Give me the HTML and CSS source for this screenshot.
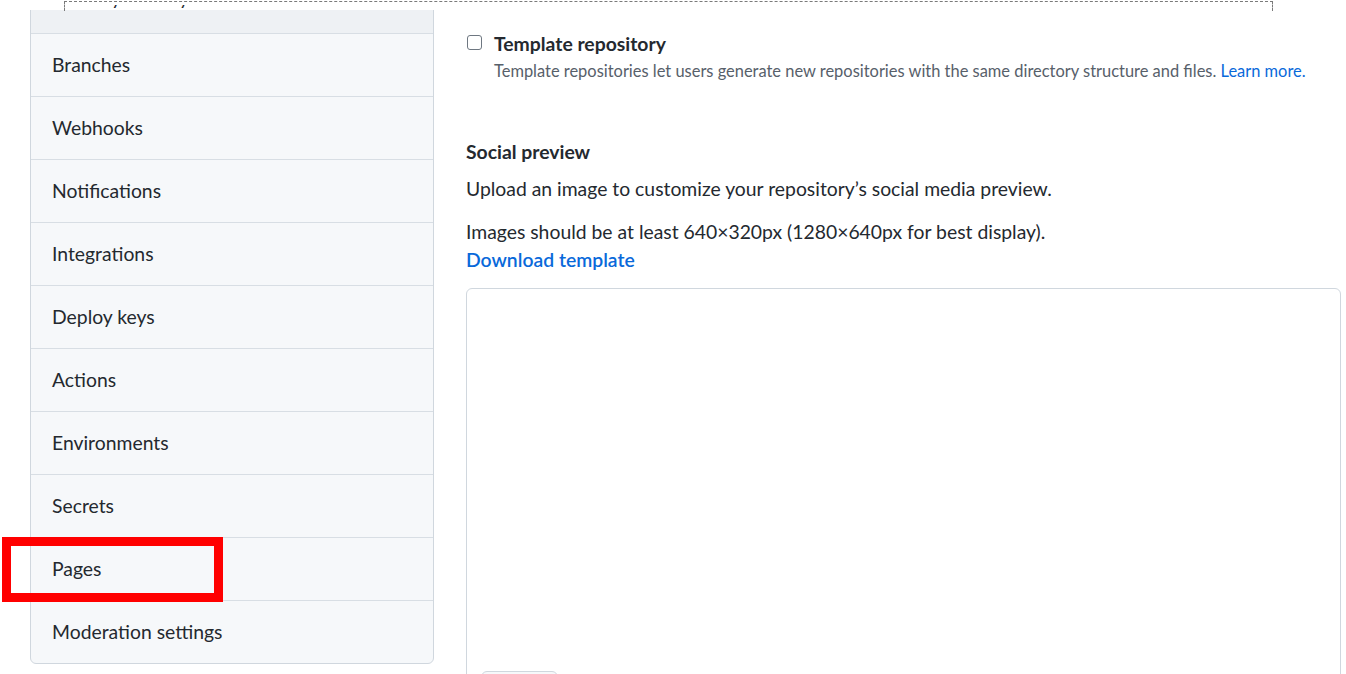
FILE: index.html
```html
<!DOCTYPE html>
<html lang="en">
<head>
<meta charset="utf-8">
<title>Repository settings</title>
<link rel="stylesheet" href="styles.css">
</head>
<body>
<div class="topstrip"></div>
<div class="topmask"><div class="dashbox"></div></div>
<div class="layout">
  <nav class="sidebar">
    <a class="menu-item hover"><span class="lbl">Security &amp; analysis</span></a>
    <a class="menu-item"><span class="lbl">Branches</span></a>
    <a class="menu-item"><span class="lbl">Webhooks</span></a>
    <a class="menu-item"><span class="lbl">Notifications</span></a>
    <a class="menu-item"><span class="lbl">Integrations</span></a>
    <a class="menu-item"><span class="lbl">Deploy keys</span></a>
    <a class="menu-item"><span class="lbl">Actions</span></a>
    <a class="menu-item"><span class="lbl">Environments</span></a>
    <a class="menu-item"><span class="lbl">Secrets</span></a>
    <a class="menu-item"><span class="lbl">Pages</span></a>
    <a class="menu-item"><span class="lbl">Moderation settings</span></a>
  </nav>
  <main class="content">
    <div class="check-row">
      <span class="checkbox"></span>
      <div class="check-text">
        <div class="check-title">Template repository</div>
        <div class="note">Template repositories let users generate new repositories with the same directory structure and files. <a class="link">Learn more.</a></div>
      </div>
    </div>
    <h3 class="section-title">Social preview</h3>
    <p class="para">Upload an image to customize your repository’s social media preview.</p>
    <p class="para tight">Images should be at least 640×320px (1280×640px for best display).<br><a class="link strong">Download template</a></p>
    <div class="preview-box">
      <div class="preview-area"></div>
      <span class="edit-btn"></span>
    </div>
  </main>
</div>
<div class="highlight"></div>
</body>
</html>
```

FILE: styles.css
```css
* { box-sizing: border-box; }
html, body { margin: 0; padding: 0; background: #ffffff; }
body {
  font-family: Lato, "Liberation Sans", sans-serif;
  color: #24292f;
  font-size: 19.35px;
  line-height: 28px;
  width: 1346px;
  height: 674px;
  overflow: hidden;
  position: relative;
}
.topstrip {
  position: absolute;
  left: 0; top: 0;
  width: 1346px;
  height: 10px;
  background: #ffffff;
  z-index: 1;
}
.topmask {
  position: absolute;
  left: 0; top: 0;
  width: 1346px;
  height: 5px;
  background: #ffffff;
  z-index: 3;
}
.dashbox {
  position: absolute;
  left: 64px; top: 1px;
  width: 1209px;
  height: 10px;
  border: 1px dashed #7a7a7a;
  border-bottom: none;
}
.layout {
  display: flex;
  align-items: flex-start;
  padding-left: 30px;
  gap: 32px;
}
.sidebar {
  width: 404px;
  flex: none;
  margin-top: -30px;
  background: #f6f8fa;
  border: 1px solid #d0d7de;
  border-radius: 6px;
  overflow: hidden;
  display: flex;
  flex-direction: column;
}
.menu-item {
  height: 63px;
  display: flex;
  align-items: center;
  padding-left: 21px;
  border-top: 1px solid #d8dee4;
  color: #24292f;
  text-decoration: none;
}
.menu-item:first-child { border-top: none; height: 62px; }
.menu-item.hover { background: #eef1f4; }
.menu-item.hover .lbl { margin-bottom: 9px; }
.lbl { position: relative; z-index: 2; }
.content {
  width: 875px;
  padding-top: 30px;
}
.check-row {
  display: flex;
  gap: 12px;
}
.checkbox {
  width: 15px;
  height: 15px;
  margin-top: 5px;
  margin-left: 1px;
  border: 1.5px solid #6e7781;
  border-radius: 3px;
  background: #fff;
  flex: none;
}
.check-title { font-weight: 700; }
.note {
  font-size: 16.45px;
  line-height: 24px;
  color: #57606a;
  margin-top: 1px;
}
.link { color: #0969da; text-decoration: none; }
.link.strong { font-weight: 600; }
.section-title {
  margin: 55px 0 0 0;
  font-size: 19.35px;
  line-height: 28px;
  font-weight: 700;
}
.para { margin: 9px 0 0 0; }
.para.tight { margin-top: 15px; }
.preview-box {
  margin-top: 14px;
  border: 1px solid #d0d7de;
  border-radius: 6px;
  padding: 0 14px 14px;
  height: 460px;
}
.preview-area { height: 382px; }
.edit-btn {
  display: inline-block;
  width: 77px;
  height: 38px;
  background: #f6f8fa;
  border: 1px solid #d0d7de;
  border-radius: 6px;
}
.highlight {
  position: absolute;
  left: 2px; top: 537px;
  width: 221px; height: 65px;
  border: 9px solid #ff0000;
  z-index: 3;
}
```
